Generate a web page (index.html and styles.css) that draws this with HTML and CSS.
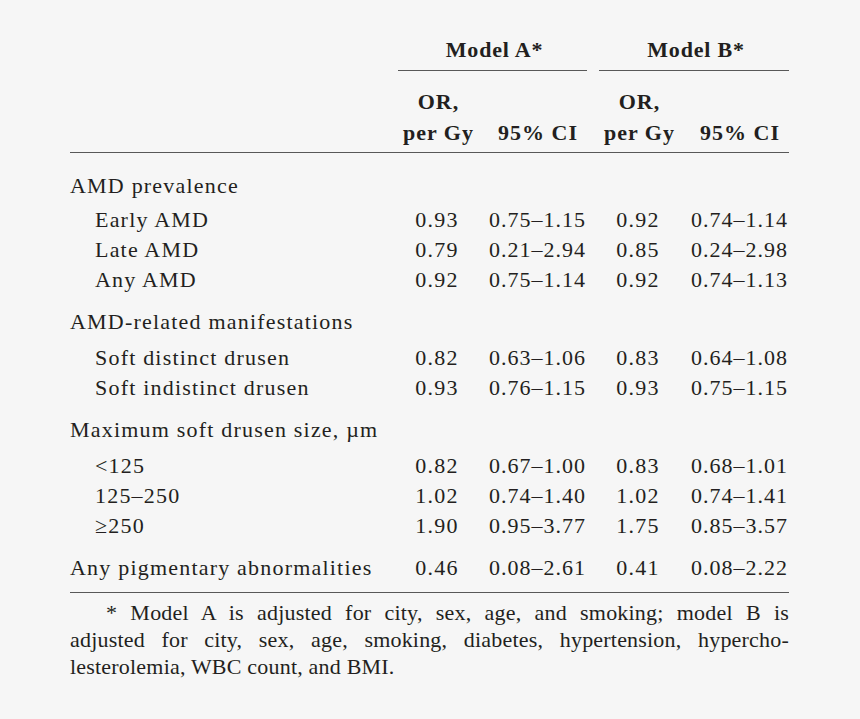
FILE: index.html
```html
<!DOCTYPE html>
<html lang="en">
<head>
<meta charset="utf-8">
<link rel="stylesheet" href="styles.css">
</head>
<body>
<div class="page">
  <div class="row head1">
    <div></div>
    <div class="group">Model A*</div>
    <div class="group groupb">Model B*</div>
  </div>
  <div class="row head2">
    <div></div>
    <div class="or">OR,<br>per Gy</div>
    <div class="ci-h">95% CI</div>
    <div class="or">OR,<br>per Gy</div>
    <div class="ci-h">95% CI</div>
  </div>
  <div class="body">
    <div class="row sec first"><div class="lab">AMD prevalence</div></div>
    <div class="row"><div class="lab sub">Early AMD</div><div class="num">0.93</div><div class="ci">0.75–1.15</div><div class="num">0.92</div><div class="ci">0.74–1.14</div></div>
    <div class="row"><div class="lab sub">Late AMD</div><div class="num">0.79</div><div class="ci">0.21–2.94</div><div class="num">0.85</div><div class="ci">0.24–2.98</div></div>
    <div class="row"><div class="lab sub">Any AMD</div><div class="num">0.92</div><div class="ci">0.75–1.14</div><div class="num">0.92</div><div class="ci">0.74–1.13</div></div>

    <div class="row sec"><div class="lab">AMD-related manifestations</div></div>
    <div class="row"><div class="lab sub">Soft distinct drusen</div><div class="num">0.82</div><div class="ci">0.63–1.06</div><div class="num">0.83</div><div class="ci">0.64–1.08</div></div>
    <div class="row"><div class="lab sub">Soft indistinct drusen</div><div class="num">0.93</div><div class="ci">0.76–1.15</div><div class="num">0.93</div><div class="ci">0.75–1.15</div></div>

    <div class="row sec"><div class="lab">Maximum soft drusen size, µm</div></div>
    <div class="row"><div class="lab sub">&lt;125</div><div class="num">0.82</div><div class="ci">0.67–1.00</div><div class="num">0.83</div><div class="ci">0.68–1.01</div></div>
    <div class="row"><div class="lab sub">125–250</div><div class="num">1.02</div><div class="ci">0.74–1.40</div><div class="num">1.02</div><div class="ci">0.74–1.41</div></div>
    <div class="row"><div class="lab sub">≥250</div><div class="num">1.90</div><div class="ci">0.95–3.77</div><div class="num">1.75</div><div class="ci">0.85–3.57</div></div>

    <div class="row single"><div class="lab">Any pigmentary abnormalities</div><div class="num">0.46</div><div class="ci">0.08–2.61</div><div class="num">0.41</div><div class="ci">0.08–2.22</div></div>
  </div>
  <div class="note">
    <span class="nl j first-line">* Model A is adjusted for city, sex, age, and smoking; model B is</span>
    <span class="nl j">adjusted for city, sex, age, smoking, diabetes, hypertension, hypercho-</span>
    <span class="nl">lesterolemia, WBC count, and BMI.</span>
  </div>
</div>
</body>
</html>
```

FILE: styles.css
```css
html, body {
  margin: 0;
  padding: 0;
  background: #f6f6f6;
}
body {
  font-family: "Liberation Serif", "Times New Roman", serif;
  color: #231f20;
  font-size: 22px;
}
.page {
  width: 719px;
  margin-left: 70px;
  padding-top: 33px;
}
.row {
  display: grid;
  grid-template-columns: 328px 80px 109px 12px 80px 110px;
  height: 30px;
  line-height: 30px;
  align-items: center;
}
.row > :nth-child(4) { grid-column: 5; }
.row > :nth-child(5) { grid-column: 6; }
.head1 {
  grid-template-columns: 328px 189px 12px 190px;
  height: auto;
  line-height: 34px;
}
.head1 > .groupb { grid-column: 4; }
.group {
  font-weight: bold;
  text-align: center;
  letter-spacing: 0.8px;
  border-bottom: 1.5px solid #585858;
  padding-left: 4px;
  padding-bottom: 3px;
}
.head2 {
  height: auto;
  line-height: 31px;
  padding-top: 15px;
  padding-bottom: 4px;
  border-bottom: 1.5px solid #585858;
  font-weight: bold;
  letter-spacing: 1px;
  align-items: end;
}
.head2 .or { text-align: center; padding-left: 1px; }
.head2 .ci-h { text-align: right; padding-right: 9px; }
.body {
  padding-top: 18px;
  padding-bottom: 9px;
  border-bottom: 1.5px solid #585858;
}
.sec { margin-top: 12px; margin-bottom: 6px; }
.sec.first { margin-top: 0; margin-bottom: 4px; }
.single { margin-top: 12px; }
.lab {
  letter-spacing: 1.2px;
  white-space: nowrap;
}
.lab.sub { padding-left: 25px; }
.num {
  text-align: center;
  letter-spacing: 1.2px;
  padding-right: 2px;
}
.ci {
  text-align: right;
  letter-spacing: 1px;
  padding-right: 1px;
}
.note {
  padding-top: 6px;
  font-size: 22px;
  line-height: 27px;
  letter-spacing: 0.2px;
}
.nl { display: block; white-space: nowrap; }
.nl.j {
  text-align: justify;
  text-align-last: justify;
}
.first-line { padding-left: 36px; }
```
